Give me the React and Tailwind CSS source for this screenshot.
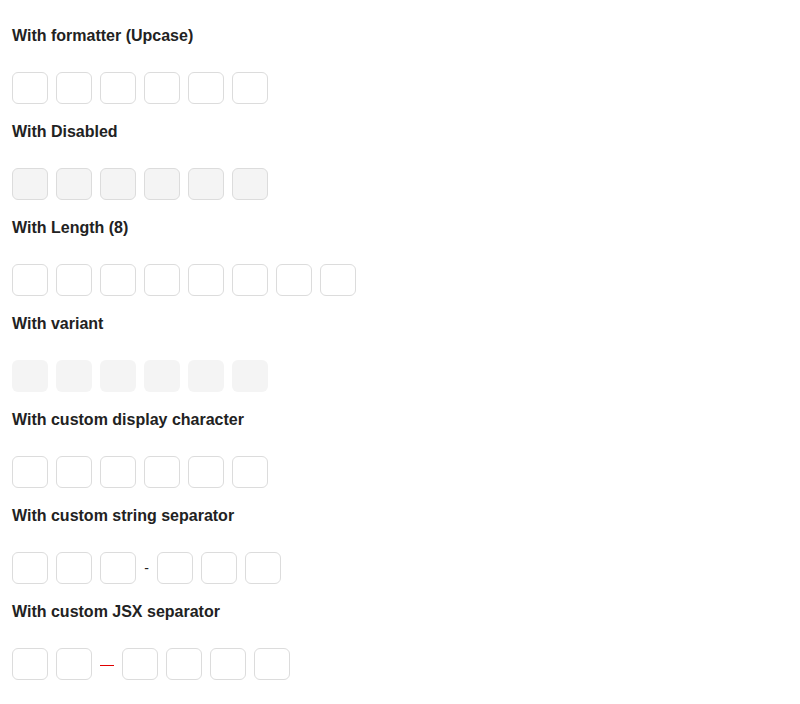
import React from "react";

function Box({ variant = "default" }) {
  const cls =
    variant === "disabled"
      ? "w-9 h-8 rounded-md border border-[#dcdcdc] bg-[#f4f4f4]"
      : variant === "filled"
      ? "w-9 h-8 rounded-md bg-[#f4f4f4]"
      : "w-9 h-8 rounded-md border border-[#dcdcdc] bg-white";
  return <div className={cls} />;
}

function Row({ n = 6, variant, sepAfter, sep }) {
  const items = [];
  for (let i = 0; i < n; i++) {
    items.push(<Box key={"b" + i} variant={variant} />);
    if (sepAfter === i + 1) items.push(<React.Fragment key="sep">{sep}</React.Fragment>);
  }
  return <div className="flex items-center gap-2">{items}</div>;
}

function Section({ title, children }) {
  return (
    <div className="flex flex-col">
      <h3 className="text-[16px] leading-6 font-bold text-[#222]">{title}</h3>
      <div className="mt-[24px] mb-[16px]">{children}</div>
    </div>
  );
}

export default function App() {
  return (
    <div
      className="bg-white min-h-[704px] pt-[24px] px-3"
      style={{ fontFamily: '"Liberation Sans", Arial, sans-serif' }}
    >
      <Section title="With formatter (Upcase)">
        <Row />
      </Section>
      <Section title="With Disabled">
        <Row variant="disabled" />
      </Section>
      <Section title="With Length (8)">
        <Row n={8} />
      </Section>
      <Section title="With variant">
        <Row variant="filled" />
      </Section>
      <Section title="With custom display character">
        <Row />
      </Section>
      <Section title="With custom string separator">
        <Row sepAfter={3} sep={<span className="text-[14px] leading-4 text-[#222] w-[5px] text-center">-</span>} />
      </Section>
      <Section title="With custom JSX separator">
        <Row sepAfter={2} sep={<div className="w-[14px] h-px bg-[#e00000] translate-y-px" />} />
      </Section>
    </div>
  );
}
